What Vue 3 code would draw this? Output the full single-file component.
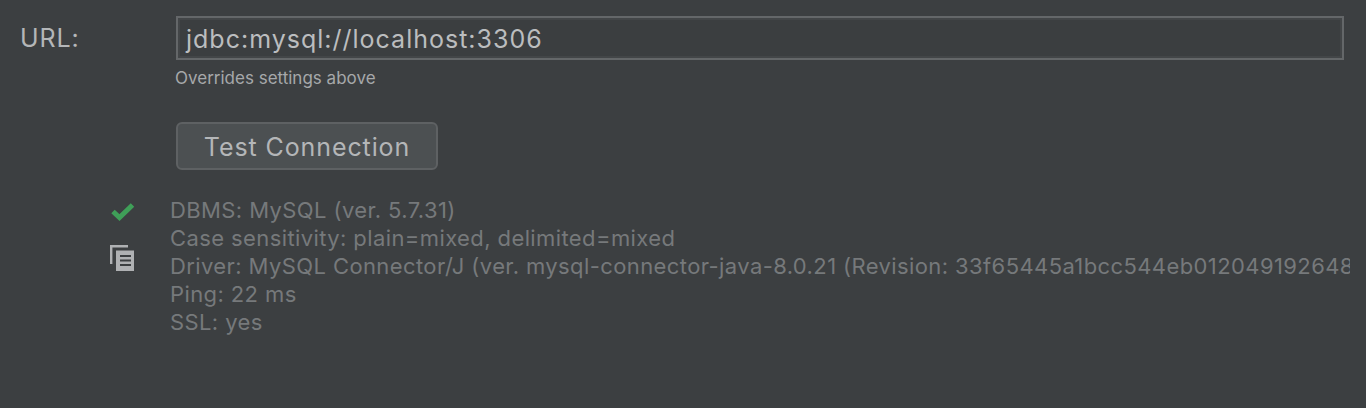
<script setup>
const lines = [
  'DBMS: MySQL (ver. 5.7.31)',
  'Case sensitivity: plain=mixed, delimited=mixed',
  'Driver: MySQL Connector/J (ver. mysql-connector-java-8.0.21 (Revision: 33f65445a1bcc544eb0120491926484da168f199))',
  'Ping: 22 ms',
  'SSL: yes'
]
</script>

<template>
  <div class="page">
    <div class="url-row">
      <label class="url-label">URL:</label>
      <div class="url-col">
        <div class="url-input">jdbc:mysql://localhost:3306</div>
        <div class="hint">Overrides settings above</div>
        <button class="test-btn">Test Connection</button>
      </div>
    </div>
    <div class="status">
      <div class="icons">
        <svg class="check" width="26" height="26" viewBox="0 0 26 26">
          <path d="M4 14.500 L10.500 20.500 L23.500 8" fill="none" stroke="#3f9f58" stroke-width="5" stroke-linejoin="miter"/>
        </svg>
        <svg class="copy" width="26" height="28" viewBox="0 0 26 28">
          <path d="M2.200 20 V2.200 H19" fill="none" stroke="#afb1b3" stroke-width="2.400"/>
          <path fill="#afb1b3" d="M7 6.500 H25 V27 H7 Z"/>
          <path fill="none" stroke="#3c3f41" stroke-width="2" d="M11 12 H22 M11 16.500 H22 M11 21 H22"/>
        </svg>
      </div>
      <div class="info">
        <div v-for="line in lines" :key="line" class="info-line">{{ line }}</div>
      </div>
    </div>
  </div>
</template>

<style scoped>
.page {
  box-sizing: border-box;
  width: 1366px;
  height: 408px;
  overflow: hidden;
  background: #3c3f41;
  font-family: Inter, "Liberation Sans", sans-serif;
  padding-top: 16px;
}
.url-row {
  display: flex;
  padding-left: 20px;
}
.url-label {
  width: 156px;
  height: 44px;
  line-height: 45px;
  font-size: 25px;
  letter-spacing: 0.9px;
  color: #b4b6b8;
}
.url-col {
  display: flex;
  flex-direction: column;
  align-items: flex-start;
}
.url-input {
  box-sizing: border-box;
  width: 1168px;
  height: 44px;
  line-height: 43px;
  padding-left: 8px;
  border: 2px solid #646769;
  background: #3b3e40;
  box-shadow: inset 0 0 0 2px #434648;
  font-size: 25px;
  letter-spacing: 1px;
  color: #bbbdbf;
}
.hint {
  margin-top: 8px;
  margin-left: -1px;
  height: 20px;
  line-height: 20px;
  font-size: 17px;
  color: #a6a8aa;
}
.test-btn {
  box-sizing: border-box;
  margin-top: 34px;
  width: 262px;
  height: 48px;
  padding: 2px 0 0;
  border: 2px solid #5e6163;
  border-radius: 6px;
  background: #4c5052;
  font-family: inherit;
  font-size: 25px;
  letter-spacing: 0.9px;
  color: #b4b6b8;
}
.status {
  display: flex;
  margin-top: 26px;
  padding-left: 109px;
}
.icons {
  width: 61px;
  display: flex;
  flex-direction: column;
  flex: none;
}
.check {
  display: block;
  margin-top: 1px;
}
.copy {
  display: block;
  margin-top: 21px;
}
.info {
  width: 1180px;
  overflow: hidden;
  flex: none;
}
.info-line {
  height: 28px;
  line-height: 28px;
  font-size: 22px;
  letter-spacing: 0.4px;
  white-space: nowrap;
  color: #76797b;
}
</style>
